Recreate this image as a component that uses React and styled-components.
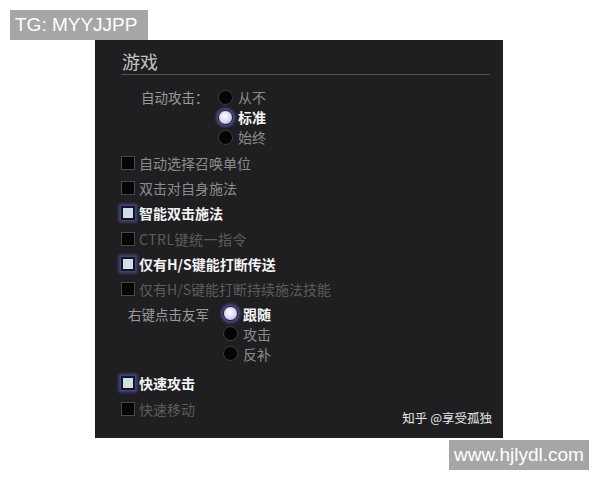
import React from 'react'
import styled, { createGlobalStyle } from 'styled-components'

const GlobalStyle = createGlobalStyle`
  body {
    margin: 0;
    background: #ffffff;
    font-family: "Noto Sans CJK SC", "Noto Sans", sans-serif;
  }
`

const Page = styled.div`
  position: relative;
  width: 600px;
  height: 480px;
  padding: 40px 0 0 95px;
  box-sizing: border-box;
`

const Badge = styled.div`
  position: absolute;
  background: #a6a6a6;
  color: #ffffff;
  font-family: "Liberation Sans", Arial, sans-serif;
  font-size: ${p => p.size}px;
  width: ${p => p.width}px;
  line-height: 30px;
  height: 30px;
  padding: 0 5px;
  box-sizing: border-box;
  white-space: nowrap;
`

const Panel = styled.div`
  position: relative;
  width: 408px;
  height: 398px;
  background: #1f1f21;
  padding: 10px 13px 0 26px;
  box-sizing: border-box;
`

const Title = styled.div`
  height: 24px;
  line-height: 22px;
  font-size: 18px;
  color: #c4c4c4;
  border-bottom: 1px solid #505054;
  padding-left: 1px;
`

const RadioGroup = styled.div`
  display: grid;
  grid-template-columns: ${p => p.labelWidth}px auto;
  padding-left: ${p => p.indent}px;
  margin-top: ${p => p.top}px;
`

const GroupLabel = styled.div`
  font-size: 13.5px;
  line-height: 20px;
  color: #9a9a9a;
`

const Options = styled.div`
  display: flex;
  flex-direction: column;
`

const Option = styled.div`
  display: flex;
  align-items: center;
  gap: 5px;
  height: 20px;
  font-size: 14px;
  color: ${p => (p.on ? '#f4f4f4' : '#8c8c8c')};
  font-weight: ${p => (p.on ? 700 : 400)};
`

const Circle = styled.span`
  width: 15px;
  height: 15px;
  border-radius: 50%;
  box-sizing: border-box;
  background: ${p => (p.on ? 'radial-gradient(circle at 45% 40%, #ffffff 0%, #d6d6f0 55%, #8f8fc0 100%)' : '#050505')};
  border: 1.5px solid ${p => (p.on ? '#2a2a50' : '#3e3e40')};
  box-shadow: ${p => (p.on ? '0 0 3px 2px rgba(110, 100, 190, 0.7)' : 'none')};
`

const Checks = styled.div`
  margin-top: ${p => p.top}px;
  display: flex;
  flex-direction: column;
`

const CheckRow = styled.div`
  display: flex;
  align-items: center;
  gap: 4px;
  height: 25.3px;
  font-size: 14px;
  letter-spacing: ${p => (p.latin ? '0.5px' : '0')};
  color: ${p => (p.on ? '#f4f4f4' : p.dim ? '#5c5c5c' : '#8c8c8c')};
  font-weight: ${p => (p.on ? 700 : 400)};
`

const Box = styled.span`
  width: 14px;
  height: 14px;
  box-sizing: border-box;
  background: ${p => (p.on ? '#cfe0e6' : '#050505')};
  border: ${p => (p.on ? '2px solid #151528' : '1.5px solid #48484a')};
  box-shadow: ${p => (p.on ? '0 0 3px 2px rgba(100, 90, 170, 0.75)' : 'none')};
`

const Credit = styled.div`
  position: absolute;
  right: 11px;
  bottom: 11px;
  font-size: 12.5px;
  color: #e8e8e8;
`

const autoAttack = [
  { text: '从不' },
  { text: '标准', on: true },
  { text: '始终' },
]

const rightClick = [
  { text: '跟随', on: true },
  { text: '攻击' },
  { text: '反补' },
]

const firstChecks = [
  { text: '自动选择召唤单位' },
  { text: '双击对自身施法' },
  { text: '智能双击施法', on: true },
  { text: 'CTRL键统一指令', dim: true, latin: true },
  { text: '仅有H/S键能打断传送', on: true },
  { text: '仅有H/S键能打断持续施法技能', dim: true },
]

const lastChecks = [
  { text: '快速攻击', on: true },
  { text: '快速移动', dim: true },
]

const Radios = ({ label, items, labelWidth, indent, top }) => (
  <RadioGroup labelWidth={labelWidth} indent={indent} top={top}>
    <GroupLabel>{label}</GroupLabel>
    <Options>
      {items.map(item => (
        <Option key={item.text} on={item.on}>
          <Circle on={item.on} />
          {item.text}
        </Option>
      ))}
    </Options>
  </RadioGroup>
)

const CheckList = ({ items, top }) => (
  <Checks top={top}>
    {items.map(item => (
      <CheckRow key={item.text} on={item.on} dim={item.dim} latin={item.latin}>
        <Box on={item.on} />
        {item.text}
      </CheckRow>
    ))}
  </Checks>
)

const App = () => (
  <Page>
    <GlobalStyle />
    <Badge size={19} width={138} style={{ left: 10, top: 10 }}>TG: MYYJJPP</Badge>
    <Panel>
      <Title>游戏</Title>
      <Radios label="自动攻击：" items={autoAttack} labelWidth={77} indent={20} top={12} />
      <CheckList items={firstChecks} top={3} />
      <Radios label="右键点击友军" items={rightClick} labelWidth={95} indent={7} top={2} />
      <CheckList items={lastChecks} top={7} />
      <Credit>知乎 @享受孤独</Credit>
    </Panel>
    <Badge size={19} width={140} style={{ left: 449, top: 440 }}>www.hjlydl.com</Badge>
  </Page>
)

export default App
